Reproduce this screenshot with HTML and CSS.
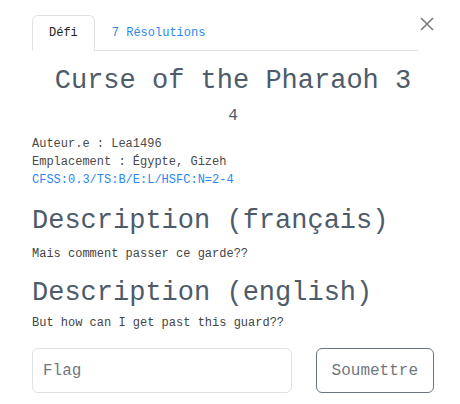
FILE: index.html
```html
<!DOCTYPE html>
<html lang="fr">
<head>
<meta charset="utf-8">
<link rel="stylesheet" href="styles.css">
</head>
<body>
<div class="modal">
  <div class="header">
    <ul class="tabs">
      <li class="tab active">Défi</li>
      <li class="tab link">7 Résolutions</li>
    </ul>
    <button class="close" aria-label="Fermer">
      <svg width="14" height="14" viewBox="0 0 14 14"><path d="M1 1L13 13M13 1L1 13" stroke="#7a7a7a" stroke-width="1.6" fill="none"/></svg>
    </button>
  </div>
  <h1 class="title">Curse of the Pharaoh 3</h1>
  <div class="num">4</div>
  <div class="meta">
    <div>Auteur.e : Lea1496</div>
    <div>Emplacement : Égypte, Gizeh</div>
    <div class="code">CFSS:0.3/TS:B/E:L/HSFC:N=2-4</div>
  </div>
  <h2 class="heading">Description (français)</h2>
  <p class="desc">Mais comment passer ce garde??</p>
  <h2 class="heading en">Description (english)</h2>
  <p class="desc last">But how can I get past this guard??</p>
  <form class="flag-form">
    <input class="flag" type="text" placeholder="Flag">
    <button type="button" class="submit">Soumettre</button>
  </form>
</div>
</body>
</html>
```
FILE: styles.css
```css
html, body {
  margin: 0;
  background: #fff;
}
body {
  font-family: "Liberation Mono", "Courier New", monospace;
  color: #444;
}
.modal {
  width: 402px;
  padding: 15px 26px 0 32px;
}
.header {
  display: flex;
  align-items: flex-start;
}
.tabs {
  flex: 1;
  display: flex;
  list-style: none;
  margin: 0;
  padding: 0;
  border-bottom: 1px solid #dee2e6;
}
.tab {
  font-size: 12px;
  height: 34px;
  line-height: 34px;
  padding: 0 16px;
  border: 1px solid transparent;
  border-radius: 6px 6px 0 0;
  margin-bottom: -1px;
}
.tab.active {
  color: #222;
  border-color: #dee2e6 #dee2e6 #fff;
  background: #fff;
}
.tab.link {
  color: #2b88f0;
}
.close {
  border: 0;
  background: none;
  padding: 0;
  margin: 2px 0 0 2px;
  width: 14px;
  height: 14px;
  display: flex;
}
.title {
  font-weight: normal;
  font-size: 27px;
  line-height: 34px;
  margin: 13px 0 0;
  text-align: center;
  color: #4e5b69;
}
.num {
  text-align: center;
  font-size: 16px;
  line-height: 24px;
  margin-top: 6px;
  color: #4e5b69;
}
.meta {
  font-size: 12px;
  line-height: 18px;
  margin-top: 7px;
  color: #4a4a4a;
}
.code {
  color: #2b88f0;
}
.heading {
  font-weight: normal;
  font-size: 27px;
  line-height: 34px;
  margin: 15px 0 0;
  color: #4e5b69;
}
.heading.en {
  margin-top: 13px;
}
.desc {
  font-size: 12px;
  line-height: 18px;
  margin: 7px 0 0;
  color: #444;
}
.desc.last {
  margin-top: 4px;
}
.flag-form {
  display: flex;
  gap: 24px;
  margin-top: 16px;
}
.flag {
  flex: 1;
  height: 45px;
  box-sizing: border-box;
  border: 1px solid #dee2e6;
  border-radius: 6px;
  padding: 0 10px;
  font-family: inherit;
  font-size: 16px;
  color: #333;
}
.flag::placeholder {
  color: #707880;
}
.submit {
  height: 45px;
  box-sizing: border-box;
  border: 1px solid #6c757d;
  border-radius: 6px;
  background: #fff;
  padding: 0 15px;
  font-family: inherit;
  font-size: 16px;
  color: #707880;
}
```
